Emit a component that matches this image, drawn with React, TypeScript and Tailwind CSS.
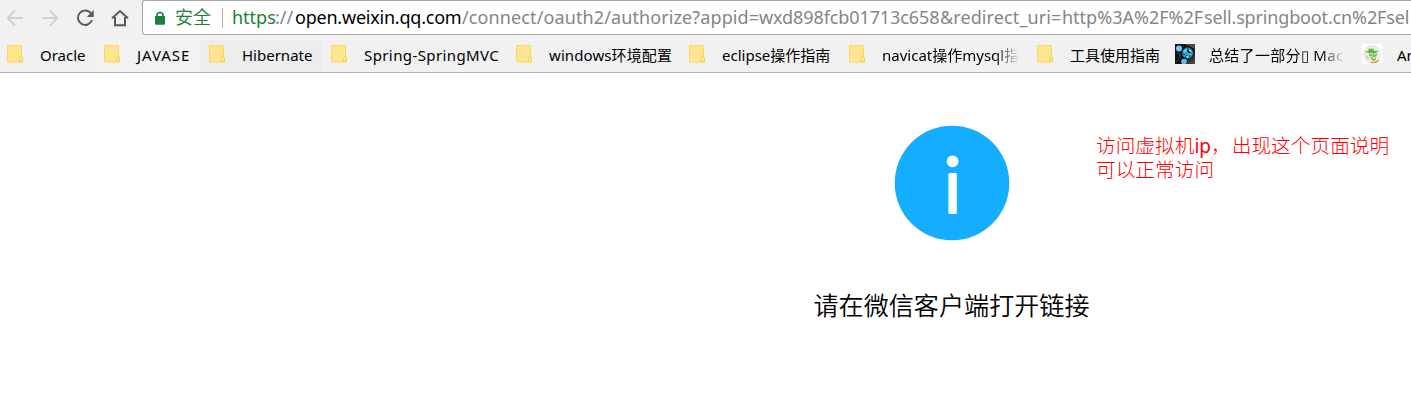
import React from "react";

const Folder = () => (
  <svg width="18" height="20" viewBox="0 0 18 20" className="block">
    <path d="M1.5 1.5h14v12h1v4.5h-15z" fill="#ffe590" stroke="#fbd75f" strokeWidth="1" />
    <path d="M13.6 17.8v-4.2l1.3-1.4 1.5 1.4v3.4l-1.1.8z" fill="#ffe793" stroke="#f2c94a" strokeWidth="0.8" />
  </svg>
);

const DarkFavicon = () => (
  <svg width="20" height="20" viewBox="0 0 20 20" className="block">
    <defs>
      <linearGradient id="dark" x1="0" y1="0" x2="1" y2="1">
        <stop offset="0" stopColor="#151515" />
        <stop offset="0.6" stopColor="#111111" />
        <stop offset="1" stopColor="#555555" />
      </linearGradient>
    </defs>
    <rect width="20" height="20" fill="url(#dark)" />
    <path d="M9 0h11v5l-4-2z" fill="#4b4b4b" />
    <circle cx="4" cy="4.5" r="3" fill="#62d0f5" />
    <circle cx="9" cy="17.5" r="2.8" fill="#55c4ee" />
    <circle cx="12.5" cy="9" r="5.4" fill="#2ba5d6" />
    <path d="M8 6l2-2M7 9l3 2M10 14l2-3M12 4l1 4 4 2M14 13l2-3" stroke="#0b2736" strokeWidth="0.9" />
    <path d="M9 8l3-3M14 6l2.5 2M11 13l3-1M14.5 10.5l2-.5" stroke="#78e0ff" strokeWidth="1.3" />
    <path d="M2 9l3 1v5M1 18l3-3" stroke="#17658a" strokeWidth="0.8" fill="none" />
  </svg>
);

const GreenFavicon = () => (
  <svg width="20" height="20" viewBox="0 0 20 20" className="block">
    <rect width="20" height="20" fill="#fdfdfd" />
    <circle cx="10" cy="10" r="9.3" fill="#ebebeb" />
    <path d="M2.5 7.5l3.8-.6L7 4.2l2 .9 2.2-.7.9 2.4 4.2.2-2.8 2.2-6 .4z" fill="#61bd30" />
    <path d="M6.5 9.2h8v4.5h-7z" fill="#d9e8d1" />
    <path d="M7 10.5l3 1M11.5 9v4M12 13l3-3M9 13l2 3 3-1" stroke="#68bd38" strokeWidth="1.4" fill="none" />
    <path d="M4.5 12l2 3" stroke="#d2b4a6" strokeWidth="1.2" />
    <path d="M9 18.3q5 1 8-2.4" stroke="#f29a28" strokeWidth="1.5" fill="none" />
  </svg>
);

type Bookmark = { label: string; item: string; text: string; icon?: React.ReactNode };

const fade = "overflow-hidden [mask-image:linear-gradient(to_right,black_82%,transparent_100%)]";

const bookmarks: Bookmark[] = [
  { label: "Oracle", item: "w-[89px]", text: "" },
  { label: "JAVASE", item: "w-[105px] bg-[#f2f2f2]", text: "tracking-[0.95px]" },
  { label: "Hibernate", item: "w-[122px] bg-[#ededed]", text: "" },
  { label: "Spring-SpringMVC", item: "w-[185px]", text: "tracking-[0.4px]" },
  { label: "windows环境配置", item: "w-[173px]", text: "tracking-[0.1px]" },
  { label: "eclipse操作指南", item: "w-[160px]", text: "" },
  { label: "navicat操作mysql指南", item: "w-[188px]", text: `w-[137px] ${fade}` },
  { label: "工具使用指南", item: "w-[139px]", text: "" },
  { label: "总结了一部分▯ Mac 软件", item: "w-[187px]", text: `w-[136px] tracking-[0.3px] ${fade}`, icon: <DarkFavicon /> },
  { label: "Android", item: "w-[120px]", text: "pl-px", icon: <GreenFavicon /> },
];

export default function App() {
  return (
    <div className="h-[414px] w-full overflow-hidden bg-white font-['Noto_Sans','Noto_Sans_CJK_SC',sans-serif] text-black">
      <header className="flex h-[73px] flex-col border-b border-[#b2b2b2] bg-[#f1f1f1]">
        <div className="flex h-[35px] shrink-0">
          <div className="flex w-[142px] shrink-0">
            <svg width="142" height="35" viewBox="0 0 142 35" fill="none">
              <path d="M23 18H8M15 10.5L7.7 18l7.3 7.5" stroke="#d0d0d0" strokeWidth="1.8" />
              <path d="M42 18h15M50 10.5l7.3 7.5-7.3 7.5" stroke="#d0d0d0" strokeWidth="1.8" />
              <path d="M91 13.5A7.2 7.2 0 1 0 92 20" stroke="#5a5a5a" strokeWidth="2" />
              <path d="M93.7 10v7h-7z" fill="#5a5a5a" />
              <path d="M112 18.3L120 11l8 7.3M115 17v8.2h10V17" stroke="#5a5a5a" strokeWidth="2" />
            </svg>
          </div>
          <div className="flex flex-1 items-center overflow-hidden rounded-l-[3px] border border-r-0 border-[#a6a6a6] bg-white pl-[11px]">
            <svg width="12" height="16" viewBox="0 0 12 16" className="mt-0.5 shrink-0">
              <path d="M3 6V4.5a3 3 0 0 1 6 0V6" fill="none" stroke="#188038" strokeWidth="1.6" />
              <rect x="1" y="5" width="10" height="8.7" rx="0.9" fill="#188038" />
            </svg>
            <span className="ml-[9px] w-[47px] shrink-0 text-[18px] font-[350] leading-[33px] text-[#188038]">安全</span>
            <span className="h-5 w-px shrink-0 bg-[#b0b0b0]" />
            <div className="ml-[9px] flex shrink-0 whitespace-nowrap text-[18px] leading-[33px] text-[#858585]">
              <span className="w-[43px] shrink-0 text-[#188038]">https</span>
              <span className="w-5 shrink-0">://</span>
              <span className="w-[167px] shrink-0 tracking-[-0.22px] text-black">open.weixin.qq.com</span>
              <span className="w-[297px] shrink-0 tracking-[0.11px]">/connect/oauth2/authorize?appid=</span>
              <span className="w-[181px] shrink-0 tracking-[-0.1px]">wxd898fcb01713c658</span>
              <span className="w-[122px] shrink-0 tracking-[0.1px]">&amp;redirect_uri=</span>
              <span className="w-[142px] shrink-0">http%3A%2F%2F</span>
              <span className="tracking-[-0.15px]">sell.springboot.cn%2Fsel</span>
            </div>
          </div>
        </div>
        <nav className="flex flex-1 items-center overflow-hidden pl-[6px] pt-[3px]">
          {bookmarks.map((b, i) => (
            <div key={b.label} className={`flex h-[31px] shrink-0 items-center ${i === 0 ? "" : "pl-[8px]"} ${b.item}`}>
              <span className="w-[34px] shrink-0 -translate-y-px">{b.icon ?? <Folder />}</span>
              <span className={`whitespace-nowrap text-[15px] leading-6 ${b.text}`}>{b.label}</span>
            </div>
          ))}
        </nav>
      </header>
      <main className="flex items-start pl-[814px]">
        <section className="flex w-[275px] shrink-0 flex-col items-center pt-[52px]">
          <svg width="116" height="116" viewBox="0 0 116 116">
            <circle cx="58" cy="58" r="57.3" fill="#14adff" />
            <circle cx="58.6" cy="36.3" r="5.9" fill="white" />
            <rect x="54.4" y="48" width="8.4" height="41" rx="1.3" fill="white" />
          </svg>
          <h1 className="mt-[45px] whitespace-nowrap text-[25.1px] font-[350] leading-[38px]">请在微信客户端打开链接</h1>
        </section>
        <p className="ml-[7px] w-[310px] whitespace-nowrap pt-[61px] text-[19.7px] font-light leading-[24px] text-[#ff0000]">
          访问虚拟机<span className="text-[19px] font-normal leading-none">ip</span>，
          <span className="ml-px">出现这个页面说明</span>
          <br />
          可以正常访问
        </p>
      </main>
    </div>
  );
}
